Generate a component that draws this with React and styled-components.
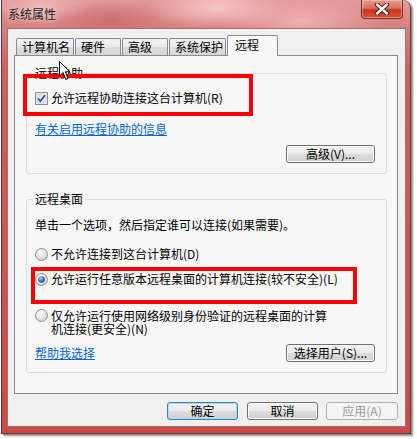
import React from 'react'
import styled, { createGlobalStyle } from 'styled-components'

const GlobalStyle = createGlobalStyle`
  html, body {
    margin: 0;
    padding: 0;
    background: #ffffff;
  }
  body {
    font-family: "Noto Sans CJK SC", "Liberation Sans", sans-serif;
    font-size: 12px;
    color: #000000;
  }
`

function CheckMark() {
  return (
    <svg width="13" height="13" viewBox="0 0 13 13">
      <rect x="0.5" y="0.5" width="12" height="12" fill="#f4f4f4" stroke="#8e8f8f" />
      <rect x="2" y="2" width="9" height="9" fill="#dfe6ee" stroke="#c3cbd4" strokeWidth="0.6" />
      <path d="M3 6.5 L5.3 9.2 L10 3.2" fill="none" stroke="#2b54a8" strokeWidth="1.8" />
    </svg>
  )
}

function RadioMark({ checked }) {
  return (
    <svg width="13" height="13" viewBox="0 0 13 13">
      <defs>
        <radialGradient id="rbg" cx="40%" cy="35%" r="70%">
          <stop offset="0%" stopColor="#fdfdfd" />
          <stop offset="100%" stopColor="#cfcfcf" />
        </radialGradient>
        <radialGradient id="rdot" cx="40%" cy="35%" r="70%">
          <stop offset="0%" stopColor="#9adcff" />
          <stop offset="60%" stopColor="#2a78c4" />
          <stop offset="100%" stopColor="#0e3f86" />
        </radialGradient>
      </defs>
      <circle cx="6.5" cy="6.5" r="6" fill="url(#rbg)" stroke="#8e8f8f" />
      {checked && <circle cx="6.5" cy="6.5" r="3.3" fill="url(#rdot)" />}
    </svg>
  )
}

function CloseGlyph() {
  return (
    <svg width="16" height="12" viewBox="0 0 16 12">
      <path d="M3 1.5 L13 10.5 M13 1.5 L3 10.5" stroke="#4a2020" strokeWidth="4.4" strokeLinecap="round" />
      <path d="M3 1.5 L13 10.5 M13 1.5 L3 10.5" stroke="#ffffff" strokeWidth="2.4" strokeLinecap="round" />
    </svg>
  )
}

function Pointer() {
  return (
    <svg width="13" height="20" viewBox="0 0 13 20">
      <path d="M0.5 0.5 L0.5 15 L4 11.5 L6.8 18.5 L9 17.5 L6.3 10.8 L11 10.8 Z" fill="#ffffff" stroke="#000000" strokeWidth="1" />
    </svg>
  )
}

const tabs = [
  { label: '计算机名', w: 58 },
  { label: '硬件', w: 46 },
  { label: '高级', w: 46 },
  { label: '系统保护', w: 57 },
  { label: '远程', w: 51, active: true },
]

export default function App() {
  return (
    <Page>
      <GlobalStyle />
      <Window>
        <TitleBar>
          <Title>系统属性</Title>
          <CloseButton>
            <CloseGlyph />
          </CloseButton>
        </TitleBar>
        <Client>
          <TabRow>
            {tabs.map((t) => (
              <Tab key={t.label} $w={t.w} $active={t.active}>
                {t.label}
              </Tab>
            ))}
          </TabRow>
          <Panel>
            <Group>
              <Legend>远程协助</Legend>
              <OptionRow $top={11}>
                <CheckMark />
                <span>允许远程协助连接这台计算机(R)</span>
              </OptionRow>
              <LinkText $top={17}>有关启用远程协助的信息</LinkText>
              <ButtonLine $top={9}>
                <Button $w={89}>高级(V)...</Button>
              </ButtonLine>
            </Group>

            <Group $top={18}>
              <Legend>远程桌面</Legend>
              <Desc>单击一个选项，然后指定谁可以连接(如果需要)。</Desc>
              <OptionRow $top={15}>
                <RadioMark />
                <span>不允许连接到这台计算机(D)</span>
              </OptionRow>
              <OptionRow $top={11}>
                <RadioMark checked />
                <span>允许运行任意版本远程桌面的计算机连接(较不安全)(L)</span>
              </OptionRow>
              <OptionRow $top={23} $wrap>
                <RadioMark />
                <WrapText>仅允许运行使用网络级别身份验证的远程桌面的计算机连接(更安全)(N)</WrapText>
              </OptionRow>
              <SplitLine $top={9}>
                <LinkText>帮助我选择</LinkText>
                <Button $w={89}>选择用户(S)...</Button>
              </SplitLine>
            </Group>
          </Panel>
          <Footer>
            <Button $w={71} $default>确定</Button>
            <Button $w={71}>取消</Button>
            <Button $w={72} disabled>应用(A)</Button>
          </Footer>
        </Client>
      </Window>
      <Marker $x={23} $y={74} $w={230} $h={42} />
      <Marker $x={31} $y={267} $w={326} $h={37} />
      <Cursor>
        <Pointer />
      </Cursor>
    </Page>
  )
}

// Style section

const Page = styled.div`
  position: relative;
  width: 417px;
  height: 439px;
  overflow: hidden;
`

const Window = styled.div`
  box-sizing: border-box;
  width: 410px;
  height: 434px;
  margin-left: 1px;
  padding: 0 4px 6px 5px;
  border: 1px solid #5a3636;
  border-top: none;
  border-radius: 0 8px 0 0;
  display: flex;
  flex-direction: column;
  box-shadow: 2px 2px 2px rgba(0, 0, 0, 0.45);
  background:
    radial-gradient(ellipse 70px 22px at 215px 8px, rgba(255, 215, 215, 0.75), transparent),
    radial-gradient(ellipse 60px 20px at 110px 20px, rgba(185, 85, 85, 0.45), transparent),
    radial-gradient(ellipse 80px 24px at 300px 22px, rgba(255, 205, 205, 0.6), transparent),
    radial-gradient(ellipse 50px 18px at 40px 6px, rgba(250, 200, 200, 0.6), transparent),
    linear-gradient(180deg, #e39a9a 0px, #d77f7f 28px, #cf6060 70px, #cb5252 300px, #d04848 100%);
`

const TitleBar = styled.div`
  height: 28px;
  display: flex;
  justify-content: space-between;
  align-items: center;
  flex-shrink: 0;
`

const Title = styled.div`
  padding-left: 1px;
  font-size: 12px;
  line-height: 14px;
  color: #1a1a1a;
  text-shadow: 0 0 6px rgba(255, 255, 255, 0.9);
`

const CloseButton = styled.div`
  align-self: flex-start;
  width: 42px;
  height: 19px;
  margin-right: 3px;
  box-sizing: border-box;
  border: 1px solid #6b2c2c;
  border-top: none;
  border-radius: 0 0 4px 4px;
  display: flex;
  align-items: center;
  justify-content: center;
  background: linear-gradient(180deg, #e79a8c 0%, #d9705e 45%, #c8331f 55%, #d9523a 100%);
  box-shadow: inset 0 0 0 1px rgba(255, 220, 210, 0.45);
`

const Client = styled.div`
  box-sizing: border-box;
  flex: 1;
  background: #f0f0f0;
  border: 1px solid #a56f6f;
  padding: 6px 7px 6px 6px;
  display: flex;
  flex-direction: column;
`

const TabRow = styled.div`
  height: 21px;
  display: flex;
  align-items: flex-end;
  padding-left: 2px;
  margin-bottom: -1px;
  position: relative;
  z-index: 1;
`

const Tab = styled.div`
  box-sizing: border-box;
  width: ${(p) => p.$w}px;
  height: ${(p) => (p.$active ? 21 : 17)}px;
  margin-bottom: ${(p) => (p.$active ? 0 : 1)}px;
  margin-right: ${(p) => (p.$active ? 0 : 1)}px;
  padding-left: ${(p) => (p.$active ? 7 : 5)}px;
  padding-top: ${(p) => (p.$active ? 2 : 1)}px;
  border: 1px solid #898c95;
  border-bottom: none;
  border-radius: 2px 2px 0 0;
  font-size: 12px;
  line-height: 14px;
  white-space: nowrap;
  background: ${(p) =>
    p.$active ? '#f7f7f7' : 'linear-gradient(180deg, #f3f3f3 0%, #ebebeb 50%, #dddddd 51%, #d6d6d6 100%)'};
`

const Panel = styled.div`
  box-sizing: border-box;
  width: 384px;
  height: 339px;
  flex-shrink: 0;
  border: 1px solid #898c95;
  background: #f7f7f7;
  padding: 10px 10px 0 11px;
`

const Group = styled.fieldset`
  box-sizing: border-box;
  margin: ${(p) => p.$top || 0}px 0 0 0;
  min-width: 0;
  border: 1px solid #d5dfe5;
  border-radius: 3px;
  padding: 0 8px 10px 8px;
`

const Legend = styled.legend`
  margin-left: -2px;
  padding: 0 2px;
  font-size: 12px;
  line-height: 14px;
  color: #000000;
`

const OptionRow = styled.div`
  margin-top: ${(p) => p.$top}px;
  display: flex;
  align-items: ${(p) => (p.$wrap ? 'flex-start' : 'center')};
  gap: 3px;
  font-size: 12px;
  line-height: ${(p) => (p.$wrap ? 13 : 14)}px;
  white-space: ${(p) => (p.$wrap ? 'normal' : 'nowrap')};
  svg {
    flex-shrink: 0;
  }
`

const WrapText = styled.span`
  flex: 0 0 282px;
  width: 282px;
`

const Desc = styled.div`
  margin-top: 12px;
  font-size: 12px;
  line-height: 14px;
  white-space: nowrap;
`

const LinkText = styled.a`
  display: block;
  width: fit-content;
  margin-top: ${(p) => p.$top || 0}px;
  font-size: 12px;
  line-height: 14px;
  color: #0066cc;
  text-decoration: underline;
  cursor: pointer;
`

const ButtonLine = styled.div`
  margin-top: ${(p) => p.$top}px;
  display: flex;
  justify-content: flex-end;
  padding-right: 3px;
`

const SplitLine = styled.div`
  margin-top: ${(p) => p.$top}px;
  display: flex;
  justify-content: space-between;
  align-items: center;
  padding-right: 3px;
`

const Button = styled.button`
  box-sizing: border-box;
  width: ${(p) => p.$w}px;
  height: 18px;
  padding: 0;
  font-family: "Noto Sans CJK SC", "Liberation Sans", sans-serif;
  font-size: 12px;
  line-height: 14px;
  color: #000000;
  border: 1px solid ${(p) => (p.$default ? '#3c7fb1' : '#707070')};
  border-radius: 3px;
  background: linear-gradient(180deg, #f2f2f2 0%, #ebebeb 49%, #dddddd 50%, #cfcfcf 100%);
  box-shadow: ${(p) => (p.$default ? 'inset 0 0 0 1px #a6dff9' : 'inset 0 0 0 1px #fbfbfb')};
  &:disabled {
    color: #9a9a9a;
    border-color: #adb2b5;
    background: #f4f4f4;
    box-shadow: none;
  }
`

const Footer = styled.div`
  margin-top: 8px;
  display: flex;
  justify-content: flex-end;
  gap: 8px;
  & > button:first-child {
    margin-right: 1px;
  }
`

const Marker = styled.div`
  position: absolute;
  box-sizing: border-box;
  left: ${(p) => p.$x}px;
  top: ${(p) => p.$y}px;
  width: ${(p) => p.$w}px;
  height: ${(p) => p.$h}px;
  border: 4px solid #ff0000;
  pointer-events: none;
`

const Cursor = styled.div`
  position: absolute;
  left: 59px;
  top: 61px;
  line-height: 0;
`
